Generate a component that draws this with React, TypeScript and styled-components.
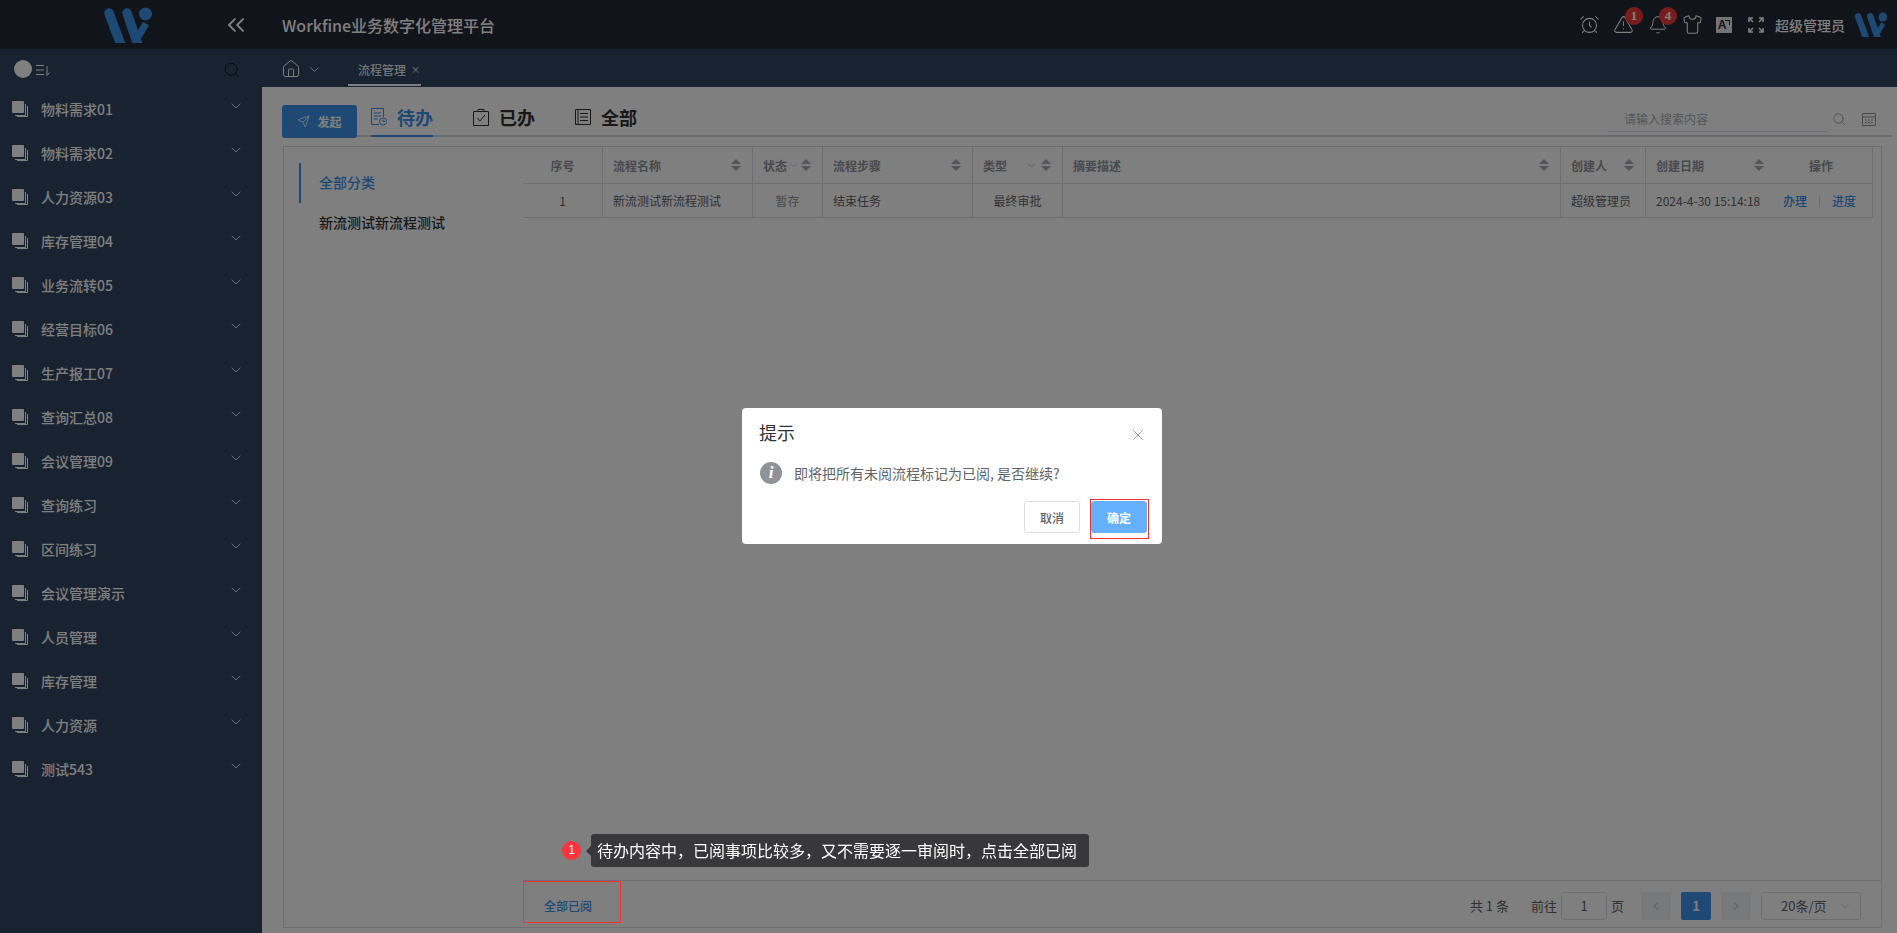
import { FC, ReactNode } from 'react';
import styled, { createGlobalStyle } from 'styled-components';
import { AlarmClock, Bell, ChevronDown, ChevronLeft, ChevronRight, ChevronsLeft, Home, Search, Send, Shirt, TriangleAlert, X } from 'lucide-react';

const primary = '#3c92e8';

const GlobalStyle = createGlobalStyle`
  html, body {
    margin: 0;
    padding: 0;
    height: 100%;
    overflow: hidden;
  }
  body {
    font-family: "Noto Sans CJK SC", "Noto Sans", "Liberation Sans", sans-serif;
    color: #303133;
  }
  * {
    box-sizing: border-box;
  }
`;

const Page = styled.div`
  display: flex;
  flex-direction: column;
  width: 1897px;
  height: 933px;
  background-color: #fff;
`;

const Header = styled.header`
  display: flex;
  align-items: center;
  flex: 0 0 49px;
  background-color: #242836;
  color: #fff;
`;

const Brand = styled.div`
  display: flex;
  align-items: center;
  flex: 0 0 262px;
  padding-left: 103px;
  height: 100%;
`;

const Collapse = styled.span`
  display: flex;
  margin-left: 69px;
  color: #fff;
`;

const PlatformTitle = styled.div`
  margin-left: 20px;
  font-size: 16px;
  font-weight: 500;
`;

const HeaderTools = styled.div`
  display: flex;
  align-items: center;
  margin-left: auto;
  padding-right: 9px;
`;

const ToolIcon = styled.span<{ $w: number }>`
  position: relative;
  display: flex;
  align-items: center;
  justify-content: center;
  width: ${({ $w }) => $w}px;
  height: 24px;
  color: #fff;
`;

const CountBadge = styled.span`
  position: absolute;
  top: -6px;
  left: 19px;
  width: 18px;
  height: 18px;
  border-radius: 50%;
  background-color: #f03a3a;
  color: #fff;
  font-family: "Liberation Serif", serif;
  font-weight: 700;
  font-size: 13px;
  line-height: 18px;
  text-align: center;
`;

const TranslateBox = styled.span`
  position: relative;
  display: flex;
  align-items: center;
  justify-content: center;
  width: 16px;
  height: 16px;
  background-color: #e8e8e8;
  color: #242836;
  font-family: "Liberation Sans", sans-serif;
  font-size: 12px;
  font-weight: 700;
  line-height: 16px;
  padding-right: 4px;
  &::after {
    content: '';
    position: absolute;
    right: 2px;
    top: 3px;
    width: 4px;
    height: 4px;
    border-top: 1px solid #242836;
    border-right: 1px solid #242836;
  }
`;

const UserName = styled.span`
  margin-left: 3px;
  font-size: 14px;
  font-weight: 500;
`;

const UserLogo = styled.span`
  display: flex;
  margin-left: 9px;
`;

const Body = styled.div`
  display: flex;
  flex: 1;
  min-height: 0;
`;

const Sidebar = styled.aside`
  flex: 0 0 262px;
  background-color: #304460;
  color: #fff;
`;

const SideTop = styled.div`
  display: flex;
  align-items: center;
  height: 38px;
  padding: 4px 21px 0 14px;
`;

const Avatar = styled.span`
  width: 18px;
  height: 18px;
  margin-top: -3px;
  border-radius: 50%;
  background-color: #fff;
`;

const SideTopIcon = styled.span`
  display: flex;
  margin-left: 4px;
  color: #fff;
`;

const SideSearch = styled.span`
  display: flex;
  margin-left: auto;
  color: #000;
  opacity: 0.75;
`;

const MenuRow = styled.div`
  display: flex;
  align-items: center;
  height: 44px;
  padding: 0 18px 0 12px;
  font-size: 14px;
  font-weight: 500;
`;

const MenuLabel = styled.span`
  margin-left: 13px;
`;

const MenuChevron = styled.span`
  display: flex;
  margin-left: auto;
  margin-top: -6px;
`;

const Main = styled.main`
  flex: 1;
  display: flex;
  flex-direction: column;
  min-width: 0;
`;

const TabBar = styled.div`
  display: flex;
  align-items: stretch;
  flex: 0 0 38px;
  background-color: #304460;
  color: #fff;
`;

const HomeTab = styled.div`
  display: flex;
  align-items: center;
  gap: 6px;
  padding: 2px 0 0 19px;
  width: 86px;
`;

const PageTab = styled.div`
  display: flex;
  align-items: center;
  gap: 5px;
  width: 73px;
  height: 37px;
  padding: 5px 0 0 10px;
  font-size: 12px;
  white-space: nowrap;
  border-bottom: 2px solid #fff;
`;

const TabClose = styled.span`
  font-size: 9px;
  line-height: 1;
`;

const Content = styled.div`
  flex: 1;
  display: flex;
  flex-direction: column;
  padding: 18px 15px 5px 20px;
  min-height: 0;
`;

const ActionRow = styled.div`
  display: flex;
  align-items: flex-end;
  height: 32px;
  margin: 0 -10px 9px 0;
  border-bottom: 2px solid #cdd5df;
`;

const StartButton = styled.button`
  display: flex;
  align-items: center;
  justify-content: center;
  gap: 7px;
  align-self: flex-start;
  width: 75px;
  height: 33px;
  border: none;
  border-radius: 3px;
  background-color: ${primary};
  color: #fff;
  font-family: inherit;
  font-size: 12px;
  font-weight: 700;
`;

const StatusTab = styled.div<{ $active?: boolean; $gap: number }>`
  display: flex;
  align-items: center;
  gap: 10px;
  height: 34px;
  margin-left: ${({ $gap }) => $gap}px;
  margin-bottom: -2px;
  padding-bottom: 4px;
  font-size: 18px;
  font-weight: 700;
  color: ${({ $active }) => ($active ? primary : '#303133')};
  border-bottom: 2px solid ${({ $active }) => ($active ? primary : 'transparent')};
`;

const SearchArea = styled.div`
  display: flex;
  align-items: center;
  margin-left: auto;
  margin-right: 16px;
  height: 30px;
  margin-bottom: 1px;
  color: #909399;
`;

const SearchInput = styled.div`
  width: 220px;
  height: 26px;
  padding-left: 16px;
  font-size: 12px;
  line-height: 26px;
  color: #a8abb2;
  border-bottom: 1px solid #dcdfe6;
`;

const SearchIconSlot = styled.span`
  display: flex;
  margin-left: 4px;
  width: 30px;
`;

const Board = styled.div`
  flex: 1;
  display: flex;
  margin-left: 1px;
  border: 1px solid #dcdfe6;
  min-height: 0;
`;

const Categories = styled.nav`
  flex: 0 0 239px;
  padding: 16px 0 0 15px;
`;

const Category = styled.div<{ $active?: boolean }>`
  display: flex;
  align-items: center;
  height: 40px;
  padding: 0 0 3px 18px;
  font-size: 14px;
  font-weight: 500;
  color: ${({ $active }) => ($active ? primary : '#303133')};
  border-left: 2px solid ${({ $active }) => ($active ? primary : 'transparent')};
`;

const ListPane = styled.div`
  flex: 1;
  display: flex;
  flex-direction: column;
  min-width: 0;
`;

const TableArea = styled.div`
  flex: 1;
  padding-right: 8px;
`;

const columns = '80px 150px 70px 150px 90px 498px 85px 227px';

const HeadRow = styled.div`
  display: grid;
  grid-template-columns: ${columns};
  height: 37px;
  border-bottom: 1px solid #dcdfe6;
`;

const DataRow = styled(HeadRow)`
  height: 34px;
`;

const Cell = styled.div<{ $center?: boolean; $muted?: boolean; $head?: boolean }>`
  display: flex;
  align-items: center;
  justify-content: ${({ $center }) => ($center ? 'center' : 'flex-start')};
  padding: 0 ${({ $center }) => ($center ? '0' : '10px')};
  font-size: 12px;
  font-weight: ${({ $head }) => ($head ? 700 : 400)};
  white-space: nowrap;
  color: ${({ $head, $muted }) => ($head || $muted ? '#909399' : '#606266')};
  border-right: 1px solid #dcdfe6;
`;

const SortCaret = styled.span<{ $left?: number }>`
  display: flex;
  flex-direction: column;
  gap: 2px;
  margin-left: ${({ $left }) => ($left === undefined ? 'auto' : `${$left}px`)};
  margin-right: 1px;
  &::before,
  &::after {
    content: '';
    width: 0;
    height: 0;
    border-left: 5px solid transparent;
    border-right: 5px solid transparent;
  }
  &::before {
    border-bottom: 5px solid #a8abb2;
  }
  &::after {
    border-top: 5px solid #a8abb2;
  }
`;

const HeadChevron = styled.span<{ $far?: boolean }>`
  display: flex;
  margin-left: ${({ $far }) => ($far ? 'auto' : '0')};
  color: #a8abb2;
`;

const ActionLinks = styled.span`
  display: flex;
  align-items: center;
  gap: 12px;
  margin-left: auto;
  margin-right: 6px;
`;

const RowLink = styled.span`
  color: ${primary};
  font-weight: 500;
`;

const RowLinkDivider = styled.span`
  width: 1px;
  height: 12px;
  background-color: #dcdfe6;
`;

const OperateTitle = styled.span`
  margin-left: 44px;
`;

const Footer = styled.div`
  display: flex;
  align-items: center;
  flex: 0 0 47px;
  padding: 3px 20px 0 21px;
  border-top: 1px solid #dcdfe6;
  font-size: 13px;
  color: #606266;
`;

const MarkAllRead = styled.span`
  color: ${primary};
  font-size: 12px;
  font-weight: 500;
`;

const Pager = styled.div`
  display: flex;
  align-items: center;
  margin-left: auto;
`;

const PagerText = styled.span<{ $left?: number }>`
  margin-left: ${({ $left }) => $left ?? 0}px;
`;

const GotoInput = styled.span`
  display: flex;
  align-items: center;
  justify-content: center;
  width: 46px;
  height: 28px;
  margin: 0 4px 0 4px;
  border: 1px solid #dcdfe6;
  border-radius: 3px;
`;

const PageButton = styled.span<{ $current?: boolean; $left?: number }>`
  display: flex;
  align-items: center;
  justify-content: center;
  width: 30px;
  height: 28px;
  margin-left: ${({ $left }) => $left ?? 10}px;
  border-radius: 2px;
  font-weight: 700;
  background-color: ${({ $current }) => ($current ? primary : '#f0f2f5')};
  color: ${({ $current }) => ($current ? '#fff' : '#c0c4cc')};
`;

const SizeSelect = styled.span`
  display: flex;
  align-items: center;
  justify-content: space-between;
  width: 100px;
  height: 28px;
  margin-left: 10px;
  padding: 0 8px 0 19px;
  border: 1px solid #dcdfe6;
  border-radius: 3px;
  color: #606266;
`;

const Overlay = styled.div`
  position: fixed;
  inset: 0;
  background-color: rgba(0, 0, 0, 0.5);
`;

const Dialog = styled.div`
  position: fixed;
  left: 742px;
  top: 408px;
  width: 420px;
  height: 136px;
  padding: 11px 15px 0 17px;
  border-radius: 4px;
  background-color: #fff;
`;

const DialogHead = styled.div`
  display: flex;
  align-items: center;
  justify-content: space-between;
  height: 25px;
  font-size: 18px;
  line-height: 1;
  color: #303133;
`;

const DialogClose = styled.span`
  display: flex;
  margin-top: 6px;
  color: #909399;
`;

const DialogBody = styled.div`
  display: flex;
  align-items: center;
  gap: 12px;
  height: 24px;
  margin-top: 17px;
  padding-left: 1px;
  font-size: 14px;
  color: #606266;
`;

const InfoIcon = styled.span`
  display: flex;
  align-items: center;
  justify-content: center;
  width: 22px;
  height: 22px;
  border-radius: 50%;
  background-color: #909399;
  color: #fff;
  font-family: "Liberation Serif", serif;
  font-style: italic;
  font-weight: 700;
  font-size: 17px;
`;

const DialogActions = styled.div`
  display: flex;
  justify-content: flex-end;
  gap: 11px;
  margin-top: 16px;
`;

const DialogButton = styled.button<{ $primary?: boolean }>`
  width: 56px;
  height: 32px;
  padding: 0;
  border-radius: 3px;
  border: 1px solid ${({ $primary }) => ($primary ? '#66b1ff' : '#dcdfe6')};
  background-color: ${({ $primary }) => ($primary ? '#66b1ff' : '#fff')};
  color: ${({ $primary }) => ($primary ? '#fff' : '#606266')};
  font-family: inherit;
  font-size: 12px;
  font-weight: ${({ $primary }) => ($primary ? 700 : 500)};
`;

const RedFrame = styled.div<{ $x: number; $y: number; $w: number; $h: number }>`
  position: fixed;
  left: ${({ $x }) => $x}px;
  top: ${({ $y }) => $y}px;
  width: ${({ $w }) => $w}px;
  height: ${({ $h }) => $h}px;
  border: 1px solid #f5312f;
`;

const GuideStep = styled.div`
  position: fixed;
  left: 562px;
  top: 834px;
  display: flex;
  align-items: center;
`;

const GuideDot = styled.span`
  width: 19px;
  height: 19px;
  border-radius: 50%;
  background-color: #f9353d;
  color: #fff;
  font-family: "Liberation Sans", sans-serif;
  font-size: 12px;
  line-height: 19px;
  text-align: center;
`;

const GuideTip = styled.div`
  position: relative;
  margin-left: 10px;
  height: 33px;
  width: 498px;
  padding-left: 6px;
  border-radius: 3px;
  background-color: #38383a;
  color: #fff;
  font-size: 16px;
  line-height: 33px;
  white-space: nowrap;
  &::before {
    content: '';
    position: absolute;
    left: -5px;
    top: 12px;
    border-top: 5px solid transparent;
    border-bottom: 5px solid transparent;
    border-right: 5px solid #38383a;
  }
`;

const WLogo: FC<{ width: number; height: number }> = ({ width, height }) => (
  <svg width={width} height={height} viewBox="0 0 50 36" fill="none">
    <path d="M6 6 18 38" stroke={primary} strokeWidth="9.5" strokeLinecap="round" />
    <path d="M24 6 35 38" stroke={primary} strokeWidth="9.5" strokeLinecap="round" />
    <path d="M32 35 43 16.5" stroke={primary} strokeWidth="7" />
    <circle cx="42.5" cy="7" r="6.5" fill={primary} />
  </svg>
);

const StackIcon = () => (
  <svg width="16" height="16" viewBox="0 0 16 16" fill="none">
    <rect x="0" y="0" width="12" height="12" rx="1" fill="#fff" />
    <path d="M13.5 3v11.5H3" stroke="#fff" strokeWidth="1" />
    <path d="M15.5 5v10.5H5" stroke="#fff" strokeWidth="1" />
  </svg>
);

const SortListIcon = () => (
  <svg width="14" height="14" viewBox="0 0 14 14" fill="none" stroke="#fff" strokeWidth="1">
    <path d="M0 2.5h8M0 7h8M0 11.5h8M11 3v9.5M11 12.5l2.5-3" />
  </svg>
);

const FullscreenIcon = () => (
  <svg width="16" height="16" viewBox="0 0 16 16" fill="none" stroke="#fff" strokeWidth="1.6">
    <path d="M1 5V1h4M1 1l4 4M11 1h4v4M15 1l-4 4M1 11v4h4M1 15l4-4M15 11v4h-4M15 15l-4-4" />
  </svg>
);

const TodoIcon = () => (
  <svg width="16" height="18" viewBox="0 0 16 18" fill="none" stroke={primary} strokeWidth="1">
    <path d="M8 16.5H.5V.5h12V9M3 5h7M3 8h7M3 11h4" />
    <circle cx="12" cy="13.5" r="3.5" />
    <path d="M12 11.5v2h2" />
  </svg>
);

const DoneIcon = () => (
  <svg width="16" height="17" viewBox="0 0 16 17" fill="none" stroke="#303133" strokeWidth="1">
    <path d="M.5 2.5h15v14H.5zM5 .5h6v2H5zM4.5 9l2.5 3 5-6" />
  </svg>
);

const AllIcon = () => (
  <svg width="16" height="16" viewBox="0 0 16 16" fill="none" stroke="#303133" strokeWidth="1">
    <path d="M.5.5h15v15H.5zM3 .5v15M5 4.5h8M5 8h8M5 11.5h8" />
  </svg>
);

const CalendarIcon = () => (
  <svg width="14" height="14" viewBox="0 0 14 14" fill="none" stroke="#909399" strokeWidth="1">
    <path d="M.5 1.5h13v12H.5zM.5 5h13M3 8h2M6 8h2M9 8h2M3 10.5h2M6 10.5h2M9 10.5h2" />
  </svg>
);

const menuItems = [
  '物料需求01',
  '物料需求02',
  '人力资源03',
  '库存管理04',
  '业务流转05',
  '经营目标06',
  '生产报工07',
  '查询汇总08',
  '会议管理09',
  '查询练习',
  '区间练习',
  '会议管理演示',
  '人员管理',
  '库存管理',
  '人力资源',
  '测试543',
];

const SortHead: FC<{ children: ReactNode; chevron?: 'near' | 'far' }> = ({ children, chevron }) => (
  <Cell $head>
    {children}
    {chevron && (
      <HeadChevron $far={chevron === 'far'}>
        <ChevronDown size={13} strokeWidth={1.2} />
      </HeadChevron>
    )}
    <SortCaret $left={chevron === 'far' ? 3 : undefined} />
  </Cell>
);

export default function App() {
  return (
    <>
      <GlobalStyle />
      <Page>
        <Header>
          <Brand>
            <WLogo width={50} height={36} />
            <Collapse>
              <ChevronsLeft size={28} strokeWidth={1.7} />
            </Collapse>
          </Brand>
          <PlatformTitle>Workfine业务数字化管理平台</PlatformTitle>
          <HeaderTools>
            <ToolIcon $w={34}>
              <AlarmClock size={21} strokeWidth={1.2} />
            </ToolIcon>
            <ToolIcon $w={34}>
              <TriangleAlert size={21} strokeWidth={1.2} />
              <CountBadge>1</CountBadge>
            </ToolIcon>
            <ToolIcon $w={36}>
              <Bell size={20} strokeWidth={1.2} />
              <CountBadge>4</CountBadge>
            </ToolIcon>
            <ToolIcon $w={32}>
              <Shirt size={21} strokeWidth={1.2} />
            </ToolIcon>
            <ToolIcon $w={32}>
              <TranslateBox>A</TranslateBox>
            </ToolIcon>
            <ToolIcon $w={32}>
              <FullscreenIcon />
            </ToolIcon>
            <UserName>超级管理员</UserName>
            <UserLogo>
              <WLogo width={34} height={25} />
            </UserLogo>
          </HeaderTools>
        </Header>
        <Body>
          <Sidebar>
            <SideTop>
              <Avatar />
              <SideTopIcon>
                <SortListIcon />
              </SideTopIcon>
              <SideSearch>
                <Search size={18} strokeWidth={1.2} />
              </SideSearch>
            </SideTop>
            {menuItems.map((item) => (
              <MenuRow key={item}>
                <StackIcon />
                <MenuLabel>{item}</MenuLabel>
                <MenuChevron>
                  <ChevronDown size={16} strokeWidth={1.3} />
                </MenuChevron>
              </MenuRow>
            ))}
          </Sidebar>
          <Main>
            <TabBar>
              <HomeTab>
                <Home size={20} strokeWidth={1.2} />
                <ChevronDown size={15} strokeWidth={1.3} />
              </HomeTab>
              <PageTab>
                流程管理
                <TabClose>×</TabClose>
              </PageTab>
            </TabBar>
            <Content>
              <ActionRow>
                <StartButton>
                  <Send size={13} strokeWidth={1.4} />
                  发起
                </StartButton>
                <StatusTab $active $gap={14}>
                  <TodoIcon />
                  待办
                </StatusTab>
                <StatusTab $gap={40}>
                  <DoneIcon />
                  已办
                </StatusTab>
                <StatusTab $gap={40}>
                  <AllIcon />
                  全部
                </StatusTab>
                <SearchArea>
                  <SearchInput>请输入搜索内容</SearchInput>
                  <SearchIconSlot>
                    <Search size={14} strokeWidth={1.3} />
                  </SearchIconSlot>
                  <CalendarIcon />
                </SearchArea>
              </ActionRow>
              <Board>
                <Categories>
                  <Category $active>全部分类</Category>
                  <Category>新流测试新流程测试</Category>
                </Categories>
                <ListPane>
                  <TableArea>
                    <HeadRow>
                      <Cell $head $center>
                        序号
                      </Cell>
                      <SortHead>流程名称</SortHead>
                      <SortHead chevron="near">状态</SortHead>
                      <SortHead>流程步骤</SortHead>
                      <SortHead chevron="far">类型</SortHead>
                      <SortHead>摘要描述</SortHead>
                      <SortHead>创建人</SortHead>
                      <Cell $head>
                        创建日期
                        <SortCaret $left={50} />
                        <OperateTitle>操作</OperateTitle>
                      </Cell>
                    </HeadRow>
                    <DataRow>
                      <Cell $center>1</Cell>
                      <Cell>新流测试新流程测试</Cell>
                      <Cell $center $muted>
                        暂存
                      </Cell>
                      <Cell>结束任务</Cell>
                      <Cell $center>最终审批</Cell>
                      <Cell />
                      <Cell>超级管理员</Cell>
                      <Cell>
                        2024-4-30 15:14:18
                        <ActionLinks>
                          <RowLink>办理</RowLink>
                          <RowLinkDivider />
                          <RowLink>进度</RowLink>
                        </ActionLinks>
                      </Cell>
                    </DataRow>
                  </TableArea>
                  <Footer>
                    <MarkAllRead>全部已阅</MarkAllRead>
                    <Pager>
                      <span>共 1 条</span>
                      <PagerText $left={22}>前往</PagerText>
                      <GotoInput>1</GotoInput>
                      <span>页</span>
                      <PageButton $left={17}>
                        <ChevronLeft size={14} />
                      </PageButton>
                      <PageButton $current>1</PageButton>
                      <PageButton>
                        <ChevronRight size={14} />
                      </PageButton>
                      <SizeSelect>
                        20条/页
                        <ChevronDown size={14} strokeWidth={1.2} color="#c0c4cc" />
                      </SizeSelect>
                    </Pager>
                  </Footer>
                </ListPane>
              </Board>
            </Content>
          </Main>
        </Body>
      </Page>
      <Overlay />
      <RedFrame $x={523} $y={881} $w={98} $h={42} />
      <GuideStep>
        <GuideDot>1</GuideDot>
        <GuideTip>待办内容中，已阅事项比较多，又不需要逐一审阅时，点击全部已阅</GuideTip>
      </GuideStep>
      <Dialog>
        <DialogHead>
          提示
          <DialogClose>
            <X size={18} strokeWidth={1.2} />
          </DialogClose>
        </DialogHead>
        <DialogBody>
          <InfoIcon>i</InfoIcon>
          即将把所有未阅流程标记为已阅, 是否继续?
        </DialogBody>
        <DialogActions>
          <DialogButton>取消</DialogButton>
          <DialogButton $primary>确定</DialogButton>
        </DialogActions>
      </Dialog>
      <RedFrame $x={1090} $y={499} $w={59} $h={40} />
    </>
  );
}
